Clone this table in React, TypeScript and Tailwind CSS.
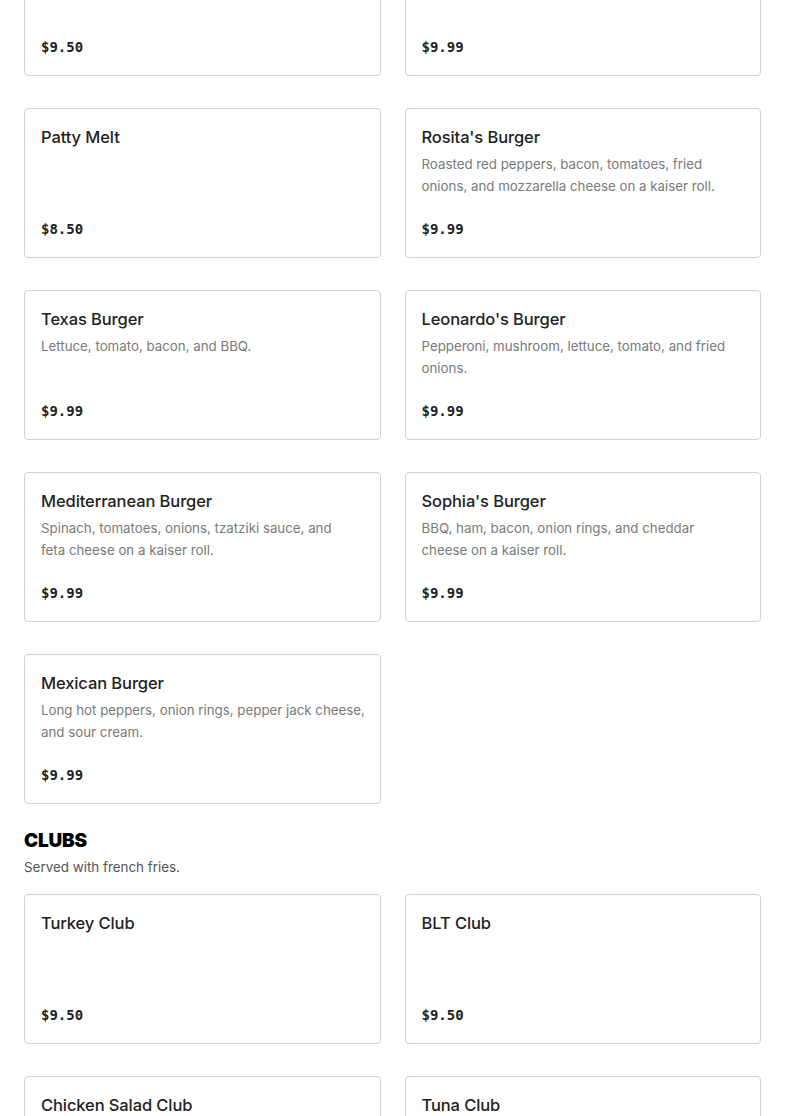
import React from "react";

type Item = { name: string; desc?: string; price: string };

const burgers: Item[] = [
  { name: "Classic Burger", price: "$9.50" },
  { name: "Bacon Cheeseburger", price: "$9.99" },
  { name: "Patty Melt", price: "$8.50" },
  {
    name: "Rosita's Burger",
    desc: "Roasted red peppers, bacon, tomatoes, fried\nonions, and mozzarella cheese on a kaiser roll.",
    price: "$9.99",
  },
  { name: "Texas Burger", desc: "Lettuce, tomato, bacon, and BBQ.", price: "$9.99" },
  {
    name: "Leonardo's Burger",
    desc: "Pepperoni, mushroom, lettuce, tomato, and fried\nonions.",
    price: "$9.99",
  },
  {
    name: "Mediterranean Burger",
    desc: "Spinach, tomatoes, onions, tzatziki sauce, and\nfeta cheese on a kaiser roll.",
    price: "$9.99",
  },
  {
    name: "Sophia's Burger",
    desc: "BBQ, ham, bacon, onion rings, and cheddar\ncheese on a kaiser roll.",
    price: "$9.99",
  },
  {
    name: "Mexican Burger",
    desc: "Long hot peppers, onion rings, pepper jack cheese,\nand sour cream.",
    price: "$9.99",
  },
];

const clubs: Item[] = [
  { name: "Turkey Club", price: "$9.50" },
  { name: "BLT Club", price: "$9.50" },
  { name: "Chicken Salad Club", price: "$9.50" },
  { name: "Tuna Club", price: "$9.50" },
];

function MenuCard({ item }: { item: Item }) {
  return (
    <div className="h-[150px] flex flex-col border border-[#d0d0d0] rounded-[4px] bg-white p-4">
      <h3 className="text-[16.5px] leading-[25px] font-medium text-[#222] font-['Inter',sans-serif] tracking-[-0.1px]">
        {item.name}
      </h3>
      {item.desc && (
        <p className="mt-[3px] whitespace-pre text-[13.3px] leading-[22px] text-[#7a7a7a] font-['Inter',sans-serif]">
          {item.desc}
        </p>
      )}
      <p className="mt-auto text-[14px] leading-[24px] font-bold text-[#222] font-['DejaVu_Sans_Mono',monospace]">
        {item.price}
      </p>
    </div>
  );
}

export default function App() {
  return (
    <div className="bg-white min-h-screen overflow-hidden">
      <div className="px-6 -mt-[74px] pb-10">
        <div className="grid grid-cols-2 gap-x-6 gap-y-8">
          {burgers.map((b) => (
            <MenuCard key={b.name} item={b} />
          ))}
        </div>

        <section className="mt-[23px]">
          <h2 className="text-[19px] leading-[28px] font-black text-black font-['Inter',sans-serif] tracking-[-0.2px]">
            CLUBS
          </h2>
          <p className="mt-[1px] text-[13.4px] leading-[22px] text-[#555] font-['Inter',sans-serif]">
            Served with french fries.
          </p>
          <div className="mt-[16px] grid grid-cols-2 gap-x-6 gap-y-8">
            {clubs.map((c) => (
              <MenuCard key={c.name} item={c} />
            ))}
          </div>
        </section>
      </div>
    </div>
  );
}
